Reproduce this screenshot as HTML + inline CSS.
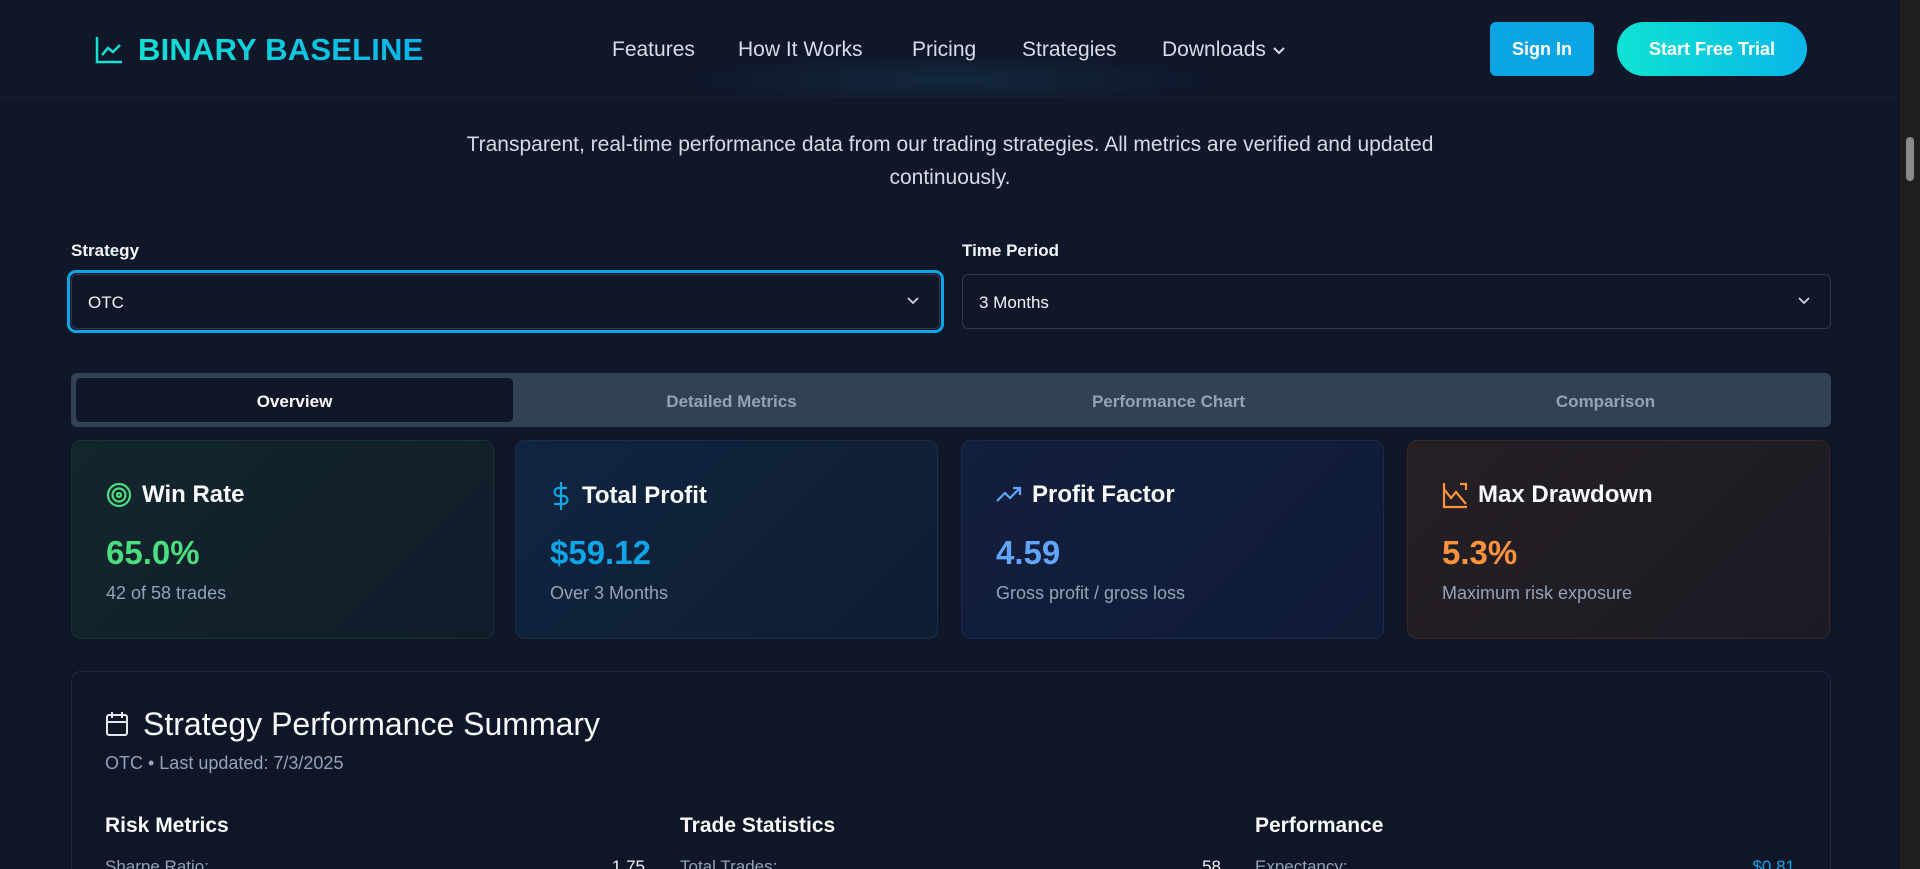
<!DOCTYPE html>
<html><head><meta charset="utf-8"><style>
*{box-sizing:border-box;margin:0;padding:0}
html,body{width:1920px;height:869px;overflow:hidden}
body{background:#0f1729;font-family:"Liberation Sans",sans-serif;color:#e2e8f0;position:relative}
.abs{position:absolute}
nav{position:absolute;left:0;top:0;width:1900px;height:98px;background:#0f1729;border-bottom:1px solid #151f33;overflow:hidden}
.glow{position:absolute;left:660px;top:50px;width:580px;height:60px;background:radial-gradient(ellipse at center,rgba(25,60,90,.45),rgba(15,23,41,0) 65%)}
.logo{left:138px;top:32px;font-size:31px;font-weight:bold;background:linear-gradient(90deg,#14e0d4,#0ab4ea);-webkit-background-clip:text;color:transparent;letter-spacing:.2px}
.nl{top:38px;font-size:21px;color:#d7dde6}
.btn{top:22px;height:54px;border-radius:6px;color:#fff;font-weight:bold;font-size:18px;display:flex;align-items:center;justify-content:center}
.sub{left:0;width:1900px;top:128px;text-align:center;font-size:21px;line-height:33px;color:#d5dbe4}
.lbl{top:241px;font-size:17px;font-weight:bold;color:#f1f5f9}
.sel{top:274px;height:55px;border:1px solid #2c3a4f;border-radius:6px;background:#0f1729;font-size:17px;color:#f1f5f9;padding:18px 0 0 16px}
.chev{position:absolute;right:18px;top:20px}
.tabs{left:71px;top:373px;width:1760px;height:54px;background:#334155;border-radius:6px}
.tab{top:380px;width:437px;height:44px;font-size:17px;font-weight:bold;color:#94a3b8;display:flex;align-items:center;justify-content:center}
.card{top:440px;width:423px;height:199px;border-radius:10px;border:1px solid #1e2d3f}
.ct{position:absolute;left:34px;top:40px;font-size:24px;font-weight:bold;color:#f8fafc;display:flex;align-items:center;gap:10px}
.cv{position:absolute;left:34px;top:93px;font-size:33px;font-weight:bold}
.cs{position:absolute;left:34px;top:142px;font-size:18px;color:#94a3b8}
.sum{left:71px;top:671px;width:1760px;height:260px;border:1px solid #1c2940;border-radius:10px;background:#0e1628}
.h3{top:814px;font-size:21px;font-weight:bold;color:#f8fafc}
.row{top:857px;font-size:17px;color:#94a3b8}
</style></head><body>
<nav>
<div class="glow"></div>
<svg class="abs" style="left:95px;top:36px" width="28" height="28" viewBox="0 0 28 28" fill="none" stroke="#14e0d4" stroke-width="2.5"><path d="M2 1v25h25"/><path d="M7 19l6-7 5 4 7-7"/></svg>
<div class="abs logo">BINARY BASELINE</div>
<div class="abs nl" style="left:612px">Features</div>
<div class="abs nl" style="left:738px">How It Works</div>
<div class="abs nl" style="left:912px">Pricing</div>
<div class="abs nl" style="left:1022px">Strategies</div>
<div class="abs nl" style="left:1162px">Downloads <svg width="14" height="10" viewBox="0 0 14 10" fill="none" stroke="#d7dde6" stroke-width="2"><path d="M2 2l5 5 5-5"/></svg></div>
<div class="abs btn" style="left:1490px;width:104px;background:#0ba5e6">Sign In</div>
<div class="abs btn" style="left:1617px;width:190px;border-radius:27px;background:linear-gradient(90deg,#0fe3d2,#09b6e8)">Start Free Trial</div>
</nav>
<div class="abs" style="left:1900px;top:0;width:20px;height:869px;background:#1f1f1f"></div>
<div class="abs" style="left:1906px;top:137px;width:8px;height:44px;background:#8a8a8a;border-radius:4px"></div>

<div class="abs sub">Transparent, real-time performance data from our trading strategies. All metrics are verified and updated<br>continuously.</div>

<div class="abs lbl" style="left:71px">Strategy</div>
<div class="abs lbl" style="left:962px">Time Period</div>
<div class="abs" style="left:67px;top:270px;width:877px;height:63px;border:3px solid #0ea5e9;border-radius:9px"></div>
<div class="abs sel" style="left:71px;width:869px">OTC<svg class="chev" width="16" height="12" viewBox="0 0 16 12" fill="none" stroke="#cbd5e1" stroke-width="1.8"><path d="M3 3l5 5 5-5"/></svg></div>
<div class="abs sel" style="left:962px;width:869px">3 Months<svg class="chev" width="16" height="12" viewBox="0 0 16 12" fill="none" stroke="#cbd5e1" stroke-width="1.8"><path d="M3 3l5 5 5-5"/></svg></div>

<div class="abs tabs"></div>
<div class="abs" style="left:76px;top:378px;width:437px;height:44px;background:#0f1729;border-radius:5px"></div>
<div class="abs tab" style="left:76px;color:#f8fafc">Overview</div>
<div class="abs tab" style="left:513px">Detailed Metrics</div>
<div class="abs tab" style="left:950px">Performance Chart</div>
<div class="abs tab" style="left:1387px">Comparison</div>

<div class="abs card" style="left:71px;background:linear-gradient(135deg,#12262c,#111c2b);border-color:#15362f">
<div class="ct"><svg width="26" height="26" viewBox="0 0 26 26" fill="none" stroke="#4ade80" stroke-width="2.2"><circle cx="13" cy="13" r="11"/><circle cx="13" cy="13" r="6.5"/><circle cx="13" cy="13" r="2"/></svg>Win Rate</div>
<div class="cv" style="color:#4ade80">65.0%</div><div class="cs">42 of 58 trades</div></div>
<div class="abs card" style="left:515px;background:linear-gradient(135deg,#10253f,#0f1d33);border-color:#163049">
<div class="ct"><svg width="22" height="30" viewBox="0 0 22 30" fill="none" stroke="#0ea5e9" stroke-width="2.2"><path d="M11 1v28M17 7H8.5a4 4 0 0 0 0 8h5a4 4 0 0 1 0 8H4"/></svg>Total Profit</div>
<div class="cv" style="color:#0ea5e9">$59.12</div><div class="cs">Over 3 Months</div></div>
<div class="abs card" style="left:961px;background:linear-gradient(135deg,#121f3d,#101c36);border-color:#1a2a4b">
<div class="ct"><svg width="26" height="22" viewBox="0 0 26 22" fill="none" stroke="#60a5fa" stroke-width="2.2"><path d="M1 17l8-8 5 5 10-10M17 4h7v7"/></svg>Profit Factor</div>
<div class="cv" style="color:#60a5fa">4.59</div><div class="cs">Gross profit / gross loss</div></div>
<div class="abs card" style="left:1407px;background:linear-gradient(135deg,#251f25,#1c1b24);border-color:#3a2824">
<div class="ct"><svg width="26" height="28" viewBox="0 0 26 28" fill="none" stroke="#fb923c" stroke-width="2.2"><path d="M2 2v24h23"/><path d="M2 8l7 9 5-6 10 12M18 3l6 0 0 6"/></svg>Max Drawdown</div>
<div class="cv" style="color:#fb923c">5.3%</div><div class="cs">Maximum risk exposure</div></div>

<div class="abs sum"></div>
<svg class="abs" style="left:105px;top:711px" width="24" height="26" viewBox="0 0 24 26" fill="none" stroke="#e2e8f0" stroke-width="2"><rect x="2" y="4" width="20" height="20" rx="2"/><path d="M7 1v6M17 1v6M2 11h20"/></svg>
<div class="abs" style="left:143px;top:706px;font-size:32px;color:#f8fafc">Strategy Performance Summary</div>
<div class="abs" style="left:105px;top:753px;font-size:18px;color:#94a3b8">OTC • Last updated: 7/3/2025</div>
<div class="abs h3" style="left:105px">Risk Metrics</div>
<div class="abs h3" style="left:680px">Trade Statistics</div>
<div class="abs h3" style="left:1255px">Performance</div>
<div class="abs row" style="left:105px">Sharpe Ratio:</div><div class="abs row" style="left:605px;width:40px;text-align:right;color:#f1f5f9">1.75</div>
<div class="abs row" style="left:680px">Total Trades:</div><div class="abs row" style="left:1181px;width:40px;text-align:right;color:#f1f5f9">58</div>
<div class="abs row" style="left:1255px">Expectancy:</div><div class="abs row" style="left:1735px;width:60px;text-align:right;color:#0ea5e9">$0.81</div>
</body></html>
